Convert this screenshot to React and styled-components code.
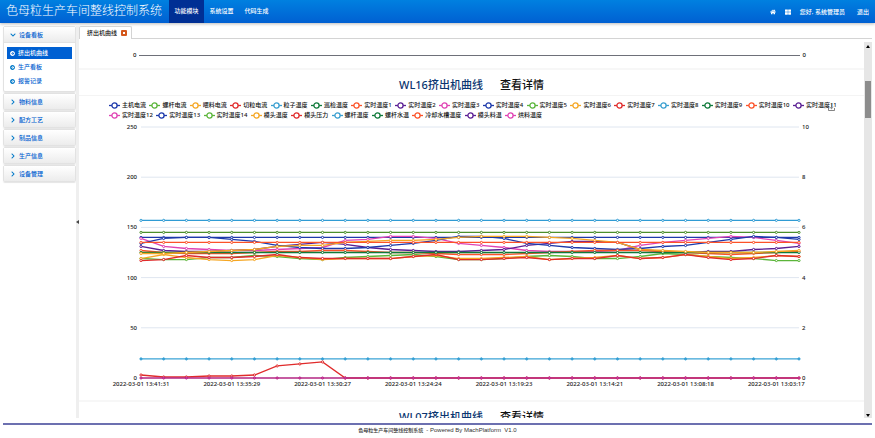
import React, { useEffect, useRef, useState } from 'react'
import styled, { createGlobalStyle } from 'styled-components'
import { FaHome, FaThLarge, FaChevronDown, FaChevronRight, FaArrowCircleRight } from 'react-icons/fa'

const menu = ['功能模块', '系统设置', '代码生成']
const boards = ['挤出机曲线', '生产看板', '报警记录']
const groups = ['物料信息', '配方工艺', '制品信息', '生产信息', '设备管理']

const palette = ['#1d39ab', '#5bb53a', '#f5a623', '#e02b2b', '#3a9fd0', '#0f7a3a', '#fc5228', '#5b1f94', '#e043b4']

const legend = [
  '主机电流', '螺杆电流', '喂料电流', '切粒电流', '粒子温度', '巡检温度',
  '实时温度1', '实时温度2', '实时温度3', '实时温度4', '实时温度5', '实时温度6',
  '实时温度7', '实时温度8', '实时温度9', '实时温度10', '实时温度11', '实时温度12',
  '实时温度13', '实时温度14', '模头温度', '模头压力', '螺杆温度', '螺杆水温',
  '冷却水槽温度', '模头料温', '烘料温度',
]

const times = [
  '2022-03-01 13:41:31', '2022-03-01 13:35:29', '2022-03-01 13:30:27', '2022-03-01 13:24:24',
  '2022-03-01 13:19:23', '2022-03-01 13:14:21', '2022-03-01 13:08:18', '2022-03-01 13:03:17',
]

const COUNT = 30
const flat = (value) => Array(COUNT).fill(value)

const series = [
  { color: '#2f9bd4', data: flat(157) },
  { color: '#4c8f2c', data: flat(145) },
  { color: '#1d39ab', data: flat(140) },
  { color: '#5bb53a', data: [119, 118, 118, 120, 120, 122, 121, 119, 118, 120, 121, 122, 123, 121, 118, 118, 119, 121, 122, 121, 119, 119, 121, 124, 123, 121, 120, 119, 117, 117] },
  { color: '#f5a623', data: [119, 123, 120, 118, 117, 118, 122, 120, 118, 119, 119, 119, 121, 122, 119, 119, 120, 121, 118, 119, 120, 122, 119, 120, 123, 121, 119, 120, 122, 121] },
  { color: '#e02b2b', data: [117, 118, 122, 120, 120, 121, 123, 120, 119, 119, 119, 119, 121, 123, 118, 118, 119, 120, 118, 119, 119, 122, 119, 120, 123, 120, 118, 119, 122, 121] },
  { color: '#e043b4', data: [139, 131, 129, 128, 127, 127, 128, 129, 130, 137, 138, 141, 141, 139, 134, 132, 130, 127, 126, 126, 126, 127, 132, 135, 137, 139, 141, 140, 137, 134] },
  { color: '#5b1f94', data: [131, 127, 126, 126, 127, 128, 131, 133, 135, 133, 130, 128, 127, 126, 126, 127, 128, 132, 134, 136, 136, 135, 128, 126, 125, 126, 126, 128, 129, 131] },
  { color: '#1d39ab', data: [134, 139, 140, 140, 138, 136, 132, 130, 129, 129, 130, 132, 134, 137, 141, 141, 139, 134, 132, 130, 129, 128, 129, 131, 132, 135, 138, 141, 140, 138] },
  { color: '#fc5228', data: [127, 125, 124, 124, 124, 125, 126, 126, 127, 127, 126, 125, 125, 124, 123, 123, 123, 124, 125, 126, 127, 127, 127, 126, 125, 124, 123, 124, 125, 126] },
  { color: '#0f7a3a', data: flat(125) },
  { color: '#f5a623', data: [124, 124, 125, 126, 127, 128, 131, 132, 132, 135, 136, 137, 137, 138, 140, 141, 141, 141, 140, 139, 137, 135, 128, 127, 126, 125, 125, 125, 126, 127] },
  { color: '#fc5228', data: flat(135) },
  { color: '#3aa3d6', data: flat(19), marker: '#2f9bd4' },
  { color: '#e02b2b', data: [3, 1, 1, 2, 2, 3, 12, 14, 16, ...Array(21).fill(0)] },
  { color: '#b82a86', data: flat(0), marker: '#e043b4' },
]

const PAD_LEFT = 62
const PAD_RIGHT = 65
const TOP = 6
const PLOT = 251

const useWidth = () => {
  const ref = useRef(null)
  const [width, setWidth] = useState(785)

  useEffect(() => {
    const observer = new ResizeObserver(([entry]) => setWidth(entry.contentRect.width))
    observer.observe(ref.current)
    return () => observer.disconnect()
  }, [])

  return [ref, width]
}

const LineChart = () => {
  const [ref, width] = useWidth()
  const right = width - PAD_RIGHT
  const step = (right - PAD_LEFT) / (COUNT - 1)
  const x = (i) => PAD_LEFT + i * step
  const y = (value) => TOP + PLOT - (value / 250) * PLOT

  return (
    <ChartBox ref={ref}>
      <svg width={width} height='279'>
        {[0, 50, 100, 150, 200, 250].map((tick) => (
          <g key={tick}>
            <line x1={PAD_LEFT} x2={right} y1={y(tick)} y2={y(tick)} stroke='#dfe6f0' />
            <text x={PAD_LEFT - 4} y={y(tick) + 2} textAnchor='end'>{tick}</text>
            <text x={right + 3} y={y(tick) + 2}>{tick / 25}</text>
          </g>
        ))}
        {series.map(({ color, data, marker }, index) => (
          <g key={index} stroke={color} fill='none'>
            <polyline points={data.map((value, i) => `${x(i)},${y(value)}`).join(' ')} strokeWidth='1.3' />
            {data.map((value, i) => (
              <circle key={i} cx={x(i)} cy={y(value)} r='1.1' fill={marker || '#fff'} strokeWidth='1' />
            ))}
          </g>
        ))}
        {times.map((time, i) => (
          <text key={time} x={x(i * 4)} y={TOP + PLOT + 8} textAnchor='middle'>{time}</text>
        ))}
      </svg>
    </ChartBox>
  )
}

const LegendItem = ({ name, color }) => (
  <LegendButton type='button'>
    <svg width='11' height='7' viewBox='0 0 11 7' stroke={color}>
      <path d='M0 3.5H11' strokeWidth='1.3' />
      <circle cx='5.5' cy='3.5' r='2.6' fill='#fff' strokeWidth='1.3' />
    </svg>
    {name}
  </LegendButton>
)

const Title = ({ name }) => (
  <ChartTitle>
    <h2>{name}挤出机曲线</h2>
    <a href='#detail'>查看详情</a>
  </ChartTitle>
)

const App = () => {
  return (
    <Page>
      <GlobalStyle />
      <Header>
        <h1>色母粒生产车间整线控制系统</h1>
        <Nav>
          {menu.map((item, i) => (
            <NavLink key={item} href='#menu' $active={i === 0}>{item}</NavLink>
          ))}
        </Nav>
        <UserBar>
          <a href='#home' aria-label='home'><FaHome /></a>
          <a href='#apps' aria-label='apps'><FaThLarge /></a>
          <span>您好, 系统管理员</span>
          <a href='#logout'>退出</a>
        </UserBar>
      </Header>

      <Body>
        <Sidebar>
          <Group>
            <GroupButton type='button'><FaChevronDown />设备看板</GroupButton>
            <SubMenu>
              {boards.map((item, i) => (
                <SubLink key={item} href='#board' $active={i === 0}>
                  <FaArrowCircleRight />{item}
                </SubLink>
              ))}
            </SubMenu>
          </Group>
          {groups.map((item) => (
            <Group key={item}>
              <GroupButton type='button'><FaChevronRight />{item}</GroupButton>
            </Group>
          ))}
        </Sidebar>
        <Splitter type='button' aria-label='collapse'>
          <svg width='3' height='4'><path d='M3 0V4L0 2Z' fill='#444' /></svg>
        </Splitter>

        <Content>
          <Tabs>
            <Tab>
              挤出机曲线
              <button type='button' aria-label='close'>
                <svg width='6' height='6'>
                  <rect width='6' height='6' rx='1' fill='#d4581c' />
                  <path d='M2 2L4 4M4 2L2 4' stroke='#fff' />
                </svg>
              </button>
            </Tab>
          </Tabs>
          <Viewport>
            <Panels>
              <PreviousAxis><span>0</span><hr /><span>0</span></PreviousAxis>
              <Title name='WL16' />
              <ChartPanel>
                <Legend>
                  {legend.map((name, i) => (
                    <LegendItem key={name} name={name} color={palette[i % palette.length]} />
                  ))}
                </Legend>
                <SaveButton type='button' aria-label='save'>
                  <svg width='7' height='7' fill='none' stroke='#666' strokeWidth='0.8'>
                    <path d='M0.5 4V6.5H6.5V4M3.5 0V4.5M1.7 3L3.5 4.7L5.3 3' />
                  </svg>
                </SaveButton>
                <LineChart />
              </ChartPanel>
              <Title name='WL07' />
            </Panels>
            <ScrollTrack>
              <svg width='4' height='3'><path d='M0 3L2 0L4 3Z' /></svg>
              <ScrollThumb />
              <svg width='4' height='3'><path d='M0 0L2 3L4 0Z' /></svg>
            </ScrollTrack>
          </Viewport>
        </Content>
      </Body>

      <Footer>
        <span>色母粒生产车间整线控制系统</span>
        <small>- Powered By MachPlatform &nbsp;V1.0</small>
      </Footer>
    </Page>
  )
}

const GlobalStyle = createGlobalStyle`
  * {
    box-sizing: border-box;
  }
  body {
    margin: 0;
    background: #fff;
    color: #111;
    font: 500 6px/8px "Noto Sans", "Noto Sans CJK SC", sans-serif;
  }
  a {
    color: inherit;
    text-decoration: none;
  }
  button {
    border: 0;
    padding: 0;
    background: none;
    color: inherit;
    font: inherit;
  }
  svg {
    display: block;
    flex: none;
  }
`

const Page = styled.div`
  height: 100vh;
  display: flex;
  flex-direction: column;
  overflow: hidden;
`

const Header = styled.header`
  flex: none;
  height: 23px;
  display: flex;
  align-items: stretch;
  padding: 0 6px;
  color: #fff;
  background: linear-gradient(#0080e0, #0060d2);
  box-shadow: 0 1px 3px #bbb;
  h1 {
    margin: 0;
    font-size: 12px;
    line-height: 22px;
    font-weight: 300;
  }
`

const Nav = styled.nav`
  display: flex;
  margin-left: 7px;
`

const NavLink = styled.a`
  width: 35px;
  line-height: 23px;
  text-align: center;
  background: ${({ $active }) => ($active ? '#002f94' : 'none')};
`

const UserBar = styled.div`
  margin-left: auto;
  display: flex;
  align-items: center;
  gap: 9px;
  svg {
    width: 6px;
    height: 6px;
  }
  a:last-child {
    margin-left: 3px;
  }
`

const Body = styled.div`
  flex: 1;
  min-height: 0;
  display: flex;
  padding: 3px 3px 5px;
`

const Sidebar = styled.aside`
  width: 73px;
  flex: none;
  display: flex;
  flex-direction: column;
  gap: 1px;
  color: #0060d0;
`

const Group = styled.section`
  border: 1px solid #e2e2e2;
  border-radius: 2px;
  box-shadow: 0 1px 1px #e5e5e5;
`

const GroupButton = styled.button`
  width: 100%;
  height: 15px;
  display: flex;
  align-items: center;
  gap: 3px;
  padding-left: 6px;
  background: linear-gradient(#fff, #ececec);
  svg {
    width: 6px;
    height: 6px;
    color: #0078c8;
  }
`

const SubMenu = styled.div`
  padding: 4px 3px;
  border-top: 1px solid #e2e2e2;
  display: flex;
  flex-direction: column;
  gap: 2px;
`

const SubLink = styled.a`
  height: 12px;
  display: flex;
  align-items: center;
  gap: 3px;
  padding-left: 3px;
  color: ${({ $active }) => ($active ? '#fff' : '#0060d0')};
  background: ${({ $active }) => ($active ? '#0060d2' : 'none')};
  svg {
    width: 5px;
    height: 5px;
    color: ${({ $active }) => ($active ? '#fff' : '#0078c8')};
  }
`

const Splitter = styled.button`
  width: 3px;
  flex: none;
  display: flex;
  align-items: center;
  background: #efefef;
`

const Content = styled.main`
  flex: 1;
  min-width: 0;
  display: flex;
  flex-direction: column;
`

const Tabs = styled.div`
  height: 13px;
  flex: none;
  display: flex;
  border-bottom: 1px solid #d4d4d4;
`

const Tab = styled.div`
  height: 13px;
  display: flex;
  align-items: center;
  gap: 4px;
  padding: 0 4px 0 7px;
  border: 1px solid #d4d4d4;
  border-bottom: 0;
  border-radius: 2px 2px 0 0;
  background: #fff;
`

const Viewport = styled.div`
  flex: 1;
  min-height: 0;
  display: flex;
  padding-top: 3px;
`

const Panels = styled.div`
  flex: 1;
  min-width: 0;
  overflow: hidden;
`

const PreviousAxis = styled.div`
  height: 28px;
  display: flex;
  align-items: center;
  gap: 3px;
  padding: 0 58px 0 54px;
  border-bottom: 2px solid #f7f7f7;
  hr {
    flex: 1;
    margin: 0;
    border: 0;
    border-top: 1px solid #6e7079;
  }
`

const ChartTitle = styled.div`
  height: 26px;
  display: flex;
  justify-content: center;
  align-items: center;
  gap: 17px;
  padding-top: 5px;
  border-bottom: 1px solid #f4f4f4;
  font-size: 11px;
  line-height: 16px;
  h2 {
    margin: 0;
    font-size: 11px;
    font-weight: 500;
    color: #0a3570;
  }
`

const ChartPanel = styled.div`
  position: relative;
  padding-top: 5px;
  border-bottom: 2px solid #f7f7f7;
`

const Legend = styled.div`
  display: flex;
  flex-wrap: wrap;
  gap: 2px 0.46%;
  padding: 0 20px 0 30px;
`

const LegendButton = styled.button`
  display: flex;
  align-items: center;
  gap: 2px;
  line-height: 8px;
  white-space: nowrap;
`

const SaveButton = styled.button`
  position: absolute;
  top: 8px;
  right: 29px;
`

const ChartBox = styled.div`
  margin-top: 2px;
  text {
    font-size: 6px;
    fill: #222;
  }
`

const ScrollTrack = styled.div`
  width: 8px;
  flex: none;
  display: flex;
  flex-direction: column;
  align-items: center;
  padding: 3px 0 1px;
  background: #e6e6e6;
  svg:last-child {
    margin-top: auto;
  }
`

const ScrollThumb = styled.div`
  width: 6px;
  height: 10%;
  margin-top: 33px;
  background: #8c8c8c;
`

const Footer = styled.footer`
  height: 15px;
  flex: none;
  margin: 0 3px;
  display: flex;
  justify-content: center;
  gap: 3px;
  padding-top: 1px;
  border-top: 2px solid #6c70b0;
  font-size: 5px;
  line-height: 9px;
  color: #333;
  small {
    font-size: 6px;
    font-family: "Liberation Sans", sans-serif;
  }
`

export default App
